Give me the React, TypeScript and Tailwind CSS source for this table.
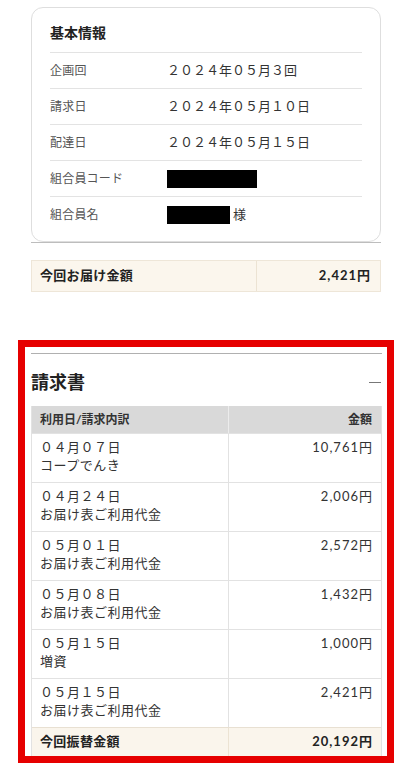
import React from "react";

const FONT = { fontFamily: "Lato, 'Noto Sans CJK JP', 'Noto Sans', sans-serif" };

const infoRows: { label: string; value?: string; kind?: "code" | "name" }[] = [
  { label: "企画回", value: "２０２４年０５月３回" },
  { label: "請求日", value: "２０２４年０５月１０日" },
  { label: "配達日", value: "２０２４年０５月１５日" },
  { label: "組合員コード", kind: "code" },
  { label: "組合員名", kind: "name" },
];

const billRows = [
  { date: "０４月０７日", desc: "コープでんき", amount: "10,761" },
  { date: "０４月２４日", desc: "お届け表ご利用代金", amount: "2,006" },
  { date: "０５月０１日", desc: "お届け表ご利用代金", amount: "2,572" },
  { date: "０５月０８日", desc: "お届け表ご利用代金", amount: "1,432" },
  { date: "０５月１５日", desc: "増資", amount: "1,000" },
  { date: "０５月１５日", desc: "お届け表ご利用代金", amount: "2,421" },
];

export default function App() {
  return (
    <div className="min-h-[775px] w-[409px] bg-white pt-[7px] text-[#333]" style={FONT}>
      {/* 基本情報 card */}
      <div className="mx-[31px] w-[350px] border-b border-[#bdbdbd]">
        <div className="rounded-[12px] border border-[#dedede] px-[18px] pb-[9px]">
          <div className="pt-[15px] pb-[9px] text-[14px] font-bold leading-[20px] text-[#222]">
            基本情報
          </div>
          {infoRows.map((r) => (
            <div key={r.label} className="flex h-[36px] items-center border-t border-[#e3e3e3]">
              <div className="w-[117px] text-[12px] tracking-[0.2px] text-[#555]">{r.label}</div>
              {r.value && <div className="text-[13px] text-[#333]">{r.value}</div>}
              {r.kind === "code" && <div className="h-[18px] w-[90px] bg-black" />}
              {r.kind === "name" && (
                <div className="flex items-center">
                  <div className="h-[18px] w-[63px] bg-black" />
                  <span className="ml-[3px] text-[13px] text-[#333]">様</span>
                </div>
              )}
            </div>
          ))}
        </div>
      </div>

      {/* 今回お届け金額 */}
      <div className="mx-[31px] mt-[17px] flex h-[32px] w-[350px] border border-[#eee6d8] bg-[#fbf6ed]">
        <div className="flex w-[225px] items-center border-r border-[#ece3d3] pl-[8px] text-[13px] font-bold tracking-[0.3px] text-[#222]">
          今回お届け金額
        </div>
        <div className="flex flex-1 items-center justify-end pr-[9px] text-[13px] font-bold tracking-[1px] text-[#222]">
          2,421円
        </div>
      </div>

      {/* 請求書 */}
      <div className="ml-[18px] mt-[48px] w-[376px] border-[7px] border-[#e60000] pl-[6px] pr-[5px]">
        <div className="pt-[6px]">
          <div className="h-[1px] bg-[#b0b0b0]" />
        </div>
        <div className="flex items-center justify-between pt-[16px] pb-[12px]">
          <div className="text-[18px] font-bold leading-[24px] text-[#222]">請求書</div>
          <div className="mr-[1px] h-[1px] w-[12px] bg-[#777]" />
        </div>

        <div className="border-x border-[#e2e2e2]">
          <div className="flex h-[27px] bg-[#d9d9d9] text-[12px] font-bold text-[#333]">
            <div className="flex w-[197px] items-center border-r border-[#ececec] pl-[8px]">
              利用日/請求内訳
            </div>
            <div className="flex flex-1 items-center justify-end pr-[9px]">金額</div>
          </div>
          {billRows.map((r, i) => (
            <div key={i} className="flex h-[49px] border-t border-[#e2e2e2] text-[13px] leading-[18px]">
              <div className="w-[197px] border-r border-[#e2e2e2] pl-[8px] pt-[4px] tracking-[0.5px]">
                <div>{r.date}</div>
                <div>{r.desc}</div>
              </div>
              <div className="flex-1 pr-[8px] pt-[4px] text-right tracking-[1px]">{r.amount}円</div>
            </div>
          ))}
          <div className="flex h-[29px] border-t border-[#e8e0d2] bg-[#faf5ec] text-[13px] font-bold text-[#222]">
            <div className="flex w-[197px] items-center border-r border-[#ece3d3] pl-[8px] tracking-[0.3px]">
              今回振替金額
            </div>
            <div className="flex flex-1 items-center justify-end pr-[8px] tracking-[1px]">20,192円</div>
          </div>
        </div>
      </div>
    </div>
  );
}
